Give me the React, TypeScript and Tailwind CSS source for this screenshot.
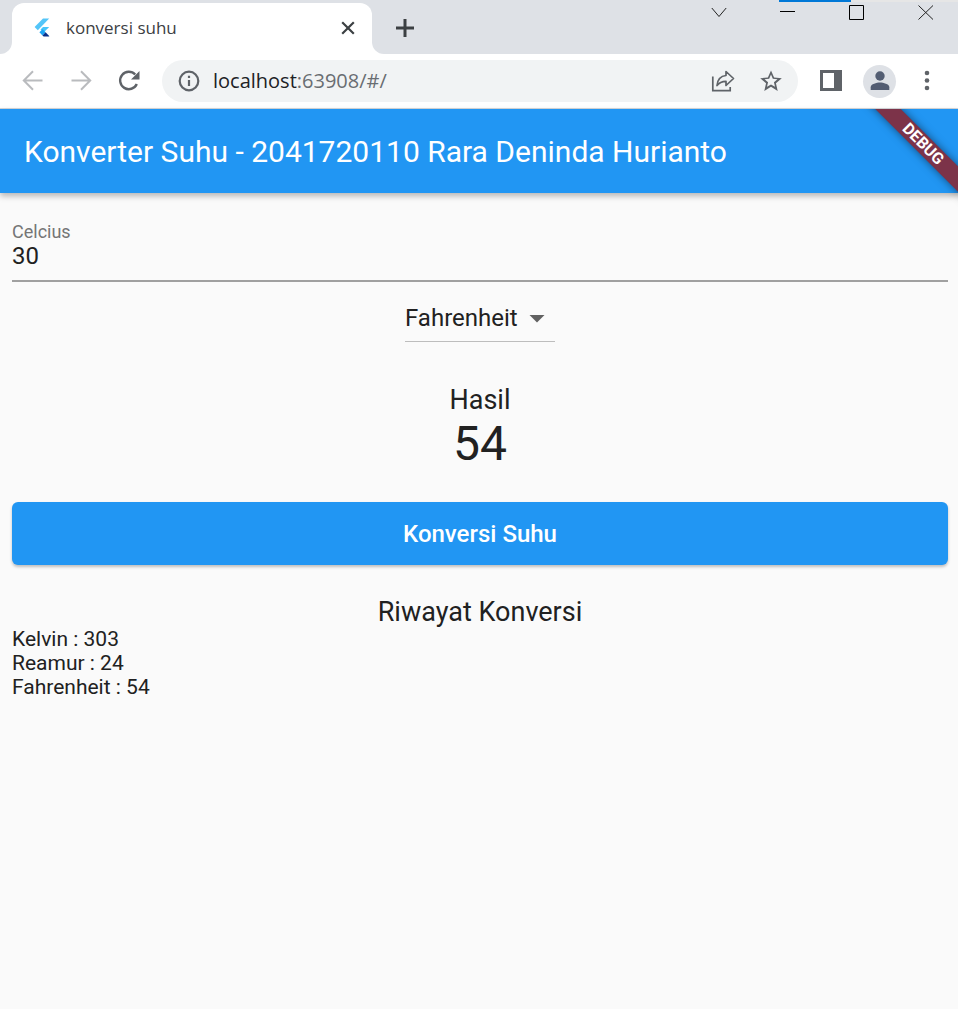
import { useState } from "react";

const results: Record<string, (c: number) => number> = {
  Kelvin: (c) => c + 273,
  Reamur: (c) => (c * 4) / 5,
  Fahrenheit: (c) => (c * 9) / 5,
};

function FlutterLogo() {
  return (
    <svg width="24" height="24" viewBox="0 0 24 24" aria-hidden="true">
      <path d="M13 2.500h6.200L7.800 14.200 4.600 11z" fill="#54c5f8" />
      <path d="M13 11h6.200l-5.600 5.500-3.100-3z" fill="#45c5fb" />
      <path d="M9.400 16.300l3.100-3.100 3.100 3.100-3.100 3.100z" fill="#1ea5f5" />
      <path d="M12.500 19.400l3.100-3.100 3.600 3.600v.6h-5.600z" fill="#08308c" />
    </svg>
  );
}

function TabStrip() {
  return (
    <div className="flex h-[54px] bg-[#dee1e6] pt-[3px]">
      <div className="flex w-3 items-end bg-white">
        <div className="h-full w-full rounded-br-xl bg-[#dee1e6]" />
      </div>
      <div className="bg-white">
        <div className="bg-[#dee1e6]">
          <div className="flex h-[51px] w-[360px] items-center rounded-t-xl bg-white pr-3 pb-0.5 pl-[18px]">
            <FlutterLogo />
            <span className="ml-3 flex-1 text-[17px] leading-6 text-[#3c4043]">konversi suhu</span>
            <button aria-label="Close tab" className="flex size-6 items-center justify-center">
              <svg width="14" height="14" viewBox="0 0 14 14" stroke="#3c4043" strokeWidth="2.2">
                <path d="M1.200 1.200l11.600 11.600M12.800 1.200L1.200 12.800" />
              </svg>
            </button>
          </div>
        </div>
      </div>
      <div className="flex-1 bg-white">
        <div className="flex h-full items-start rounded-bl-xl bg-[#dee1e6]">
          <button aria-label="New tab" className="mt-[13px] ml-[21px] flex size-6 items-center justify-center">
            <svg width="20" height="20" viewBox="0 0 20 20" stroke="#3c4043" strokeWidth="3">
              <path d="M1 10h18M10 1v18" />
            </svg>
          </button>
          <div className="ml-auto flex gap-[53px] pr-6 [&_svg]:block">
            <button aria-label="Search tabs">
              <svg width="16" height="18" viewBox="0 0 16 18" fill="none" stroke="#222">
                <path d="M.8 5l7.200 8.500L15.200 5" />
              </svg>
            </button>
            <button aria-label="Minimize">
              <svg width="16" height="18" viewBox="0 0 16 18" stroke="#000">
                <path d="M0 8.500h15" />
              </svg>
            </button>
            <button aria-label="Maximize">
              <svg width="16" height="18" viewBox="0 0 16 18" fill="none" stroke="#000">
                <path d="M.5 2.500h14v14H.5z" />
              </svg>
            </button>
            <button aria-label="Close window">
              <svg width="16" height="18" viewBox="0 0 16 18" stroke="#222">
                <path d="M.5 2.500l14.500 14M15 2.500L.5 16.500" />
              </svg>
            </button>
          </div>
        </div>
      </div>
    </div>
  );
}

function Toolbar() {
  return (
    <div className="flex h-[55px] items-center border-b border-[#d5d7da] bg-white pr-[19px] pl-[21px] [&_svg]:block">
      <div className="flex gap-6">
        <button aria-label="Back">
          <svg width="24" height="24" viewBox="0 0 24 24" fill="none" stroke="#b9bbbe" strokeWidth="2">
            <path d="M21.500 11.500H3M12 2.300l-9.200 9.200 9.200 9.200" />
          </svg>
        </button>
        <button aria-label="Forward">
          <svg width="24" height="24" viewBox="0 0 24 24" fill="none" stroke="#b9bbbe" strokeWidth="2">
            <path d="M2.500 11.500H21M12 2.300l9.200 9.200-9.200 9.200" />
          </svg>
        </button>
        <button aria-label="Reload">
          <svg width="24" height="24" viewBox="0 0 24 24">
            <path d="M19.800 15A8.700 8.700 0 1 1 18.200 5.500" fill="none" stroke="#5f6368" strokeWidth="2.400" />
            <path d="M22.500 2v8.500H14z" fill="#5f6368" />
          </svg>
        </button>
      </div>
      <div className="ml-[21px] flex h-[42px] flex-1 items-center rounded-full bg-[#f1f3f4] pr-[15px] pl-4">
        <svg width="22" height="22" viewBox="0 0 22 22" fill="none" stroke="#5f6368" strokeWidth="2.200" aria-hidden="true">
          <circle cx="11" cy="11" r="9.300" />
          <path d="M11 10v6M11 5.800V8" />
        </svg>
        <div className="ml-[13px] flex-1 text-[20px] leading-7 text-[#696d72]">
          <span className="text-[#202124]">localhost</span>:63908/#/
        </div>
        <button aria-label="Share">
          <svg width="24" height="24" viewBox="0 0 24 24" fill="none" stroke="#5f6368" strokeWidth="1.700">
            <path d="M1.800 7.500v14.200h17.400V18" />
            <path d="M15 2.500l7.500 7-7.500 7v-4.200c-4.500 0-7 1.400-9 4.200.5-5.500 3.800-9.500 9-10z" strokeLinejoin="round" />
          </svg>
        </button>
        <button aria-label="Bookmark" className="ml-6">
          <svg width="24" height="24" viewBox="0 0 24 24" fill="#5f6368">
            <path d="M22.800 9.240l-7.700-.67L12 1.400 8.900 8.580l-7.700.66 5.850 5.070L5.300 21.900 12 17.770l6.700 4.130-1.760-7.590zM12 15.400l-4 2.420 1.070-4.560-3.530-3.060 4.660-.4L12 5.500l1.810 4.310 4.660.4-3.530 3.060L16 17.820z" />
          </svg>
        </button>
      </div>
      <button aria-label="Side panel" className="ml-[22px]">
        <svg width="22" height="22" viewBox="0 0 22 22" fill="#5f6368">
          <path fillRule="evenodd" d="M0 0h22v21H0zM3 3v15h11V3z" />
        </svg>
      </button>
      <button aria-label="Profile" className="ml-[21px] flex size-[33px] items-center justify-center rounded-full bg-[#dee1e6]">
        <svg width="20" height="20" viewBox="0 0 20 20" fill="#535d72">
          <circle cx="10" cy="5" r="4.700" />
          <path d="M.7 19v-2.800c0-3 6-4.600 9.300-4.600s9.300 1.600 9.300 4.600V19z" />
        </svg>
      </button>
      <button aria-label="Menu" className="ml-[21px]">
        <svg width="22" height="22" viewBox="0 0 22 22" fill="#5f6368">
          <circle cx="10" cy="3" r="2.300" />
          <circle cx="10" cy="10.500" r="2.300" />
          <circle cx="10" cy="18" r="2.300" />
        </svg>
      </button>
    </div>
  );
}

export default function App() {
  const [celsius, setCelsius] = useState("30");
  const [unit, setUnit] = useState("Fahrenheit");
  const [result, setResult] = useState(54);
  const [history, setHistory] = useState(["Kelvin : 303", "Reamur : 24", "Fahrenheit : 54"]);

  const convert = () => {
    const value = results[unit](Number(celsius) || 0);
    setResult(value);
    setHistory([...history, `${unit} : ${value}`]);
  };

  return (
    <div className="flex min-h-screen flex-col bg-[#fafafa]">
      <div className="relative font-['Open_Sans',sans-serif]">
        <TabStrip />
        <Toolbar />
        <div className="absolute top-0 right-0 flex h-0.5 w-[179px] bg-[#e6e6e6]">
          <div className="w-[72px] bg-[#0078d7]" />
        </div>
      </div>

      <div className="relative flex-1 font-['Roboto',sans-serif] text-[#212121]">
        <header className="flex h-[84px] items-center bg-[#2196f3] px-6 pt-0.5 shadow-[0_3px_6px_rgba(0,0,0,0.28)]">
          <h1 className="text-[30px] leading-9 text-white">Konverter Suhu - 2041720110 Rara Deninda Hurianto</h1>
        </header>
        <div className="pointer-events-none absolute top-0 right-0 size-[110px] overflow-hidden">
          <div className="absolute top-[26px] -right-[65px] flex h-[18px] w-[200px] rotate-45 items-center justify-center bg-[#7c3349] text-[16px] leading-[18px] font-bold text-white shadow-[0_0_9px_rgba(0,0,0,0.5)]">
            DEBUG
          </div>
        </div>

        <main className="flex flex-col pt-7 pr-[10px] pl-3">
          <label htmlFor="celsius" className="text-[18px] leading-[21px] text-[#757575]">
            Celcius
          </label>
          <input
            id="celsius"
            inputMode="numeric"
            value={celsius}
            onChange={(e) => setCelsius(e.target.value)}
            className="h-10 w-full border-b-2 border-[#a0a0a0] pb-2.5 text-2xl leading-7 outline-none"
          />
          <div className="relative mt-3 w-[150px] self-center">
            <select
              aria-label="Unit"
              value={unit}
              onChange={(e) => setUnit(e.target.value)}
              className="h-12 w-full appearance-none border-b border-[#bdbdbd] text-2xl leading-7 outline-none"
            >
              <option>Fahrenheit</option>
              <option>Kelvin</option>
              <option>Reamur</option>
            </select>
            <svg className="pointer-events-none absolute top-[21px] right-[10px]" width="16" height="8" viewBox="0 0 16 8" fill="#616161" aria-hidden="true">
              <path d="M.5 0h15L8 7.500z" />
            </svg>
          </div>
          <section className="mt-[42px] text-center">
            <h2 className="text-[27px] leading-8">Hasil</h2>
            <output className="block text-5xl leading-14">{result}</output>
          </section>
          <button
            onClick={convert}
            className="mt-[30px] h-[63px] w-full rounded-md bg-[#2196f3] text-2xl font-medium text-white shadow-[0_2px_3px_rgba(0,0,0,0.24)]"
          >
            Konversi Suhu
          </button>
          <h2 className="mt-[31px] text-center text-[27px] leading-8">Riwayat Konversi</h2>
          <ul className="-mt-px text-[21px] leading-6">
            {history.map((entry, i) => (
              <li key={i}>{entry}</li>
            ))}
          </ul>
        </main>
      </div>
    </div>
  );
}
